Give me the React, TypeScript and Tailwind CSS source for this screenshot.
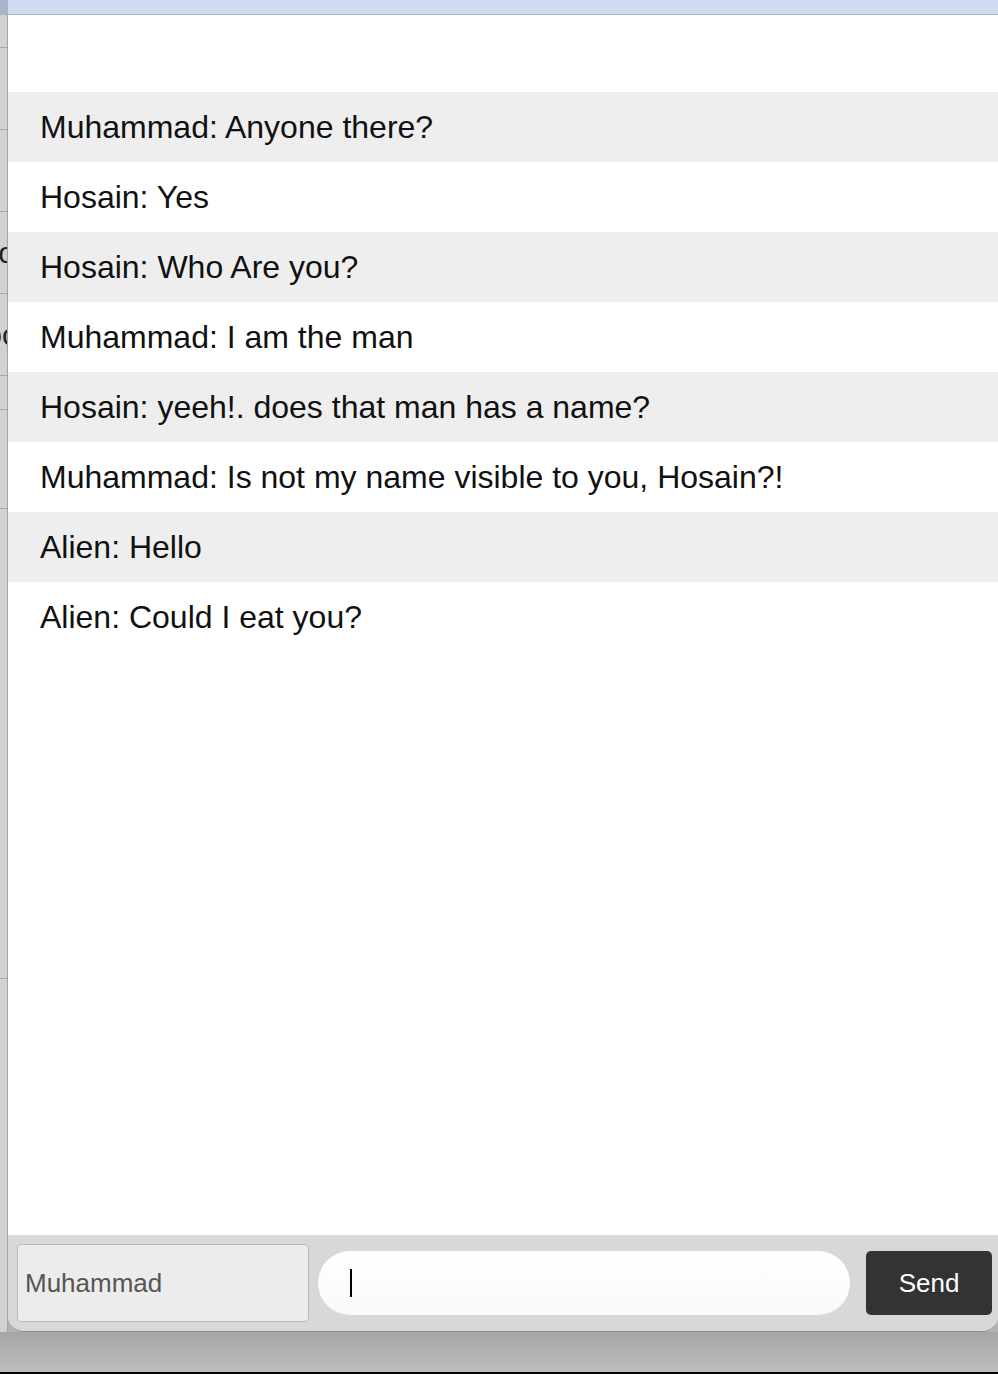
const messages = [
  "Muhammad: Anyone there?",
  "Hosain: Yes",
  "Hosain: Who Are you?",
  "Muhammad: I am the man",
  "Hosain: yeeh!. does that man has a name?",
  "Muhammad: Is not my name visible to you, Hosain?!",
  "Alien: Hello",
  "Alien: Could I eat you?",
]

const SideStrip = () => {
  return <div className="w-[8px] flex flex-col bg-[#d1d1d1] border-r border-[#a4a4a4]">
    <div className="h-[33px] border-b border-[#a9a9a9]" />
    <div className="h-[82px] border-b border-[#a9a9a9]" />
    <div className="h-[82px] border-b border-[#a9a9a9]" />
    <div className="h-[82px] border-b border-[#a9a9a9] flex items-center justify-end overflow-hidden">
      <span className="text-[30px] leading-none text-[#222] mr-[-8px]">bo</span>
    </div>
    <div className="h-[82px] border-b border-[#a9a9a9] flex items-center justify-end overflow-hidden">
      <span className="text-[30px] leading-none text-[#222] mr-[-10px]">oc</span>
    </div>
    <div className="h-[34px] border-b border-[#a9a9a9]" />
    <div className="h-[99px] border-b border-[#a9a9a9]" />
    <div className="h-[470px] border-b border-[#a9a9a9]" />
    <div className="flex-1" />
  </div>
}

const ChatPanel = () => {
  return <div className="flex-1 flex flex-col bg-white rounded-b-[16px] overflow-hidden border-b border-[#8e8e8e]">
    <div className="h-[77px]" />
    <ul className="flex flex-col">
      {messages.map((m, i) => (
        <li
          key={i}
          className={`h-[70px] flex items-center pl-[32px] text-[32px] text-[#111] ${i % 2 === 0 ? "bg-[#eeeeee]" : "bg-white"}`}
        >
          {m}
        </li>
      ))}
    </ul>
    <div className="flex-1" />
    <div className="h-[96px] bg-[#d8d8d8] flex items-center pl-[9px] pr-[6px]">
      <div className="w-[292px] h-[78px] bg-[#ececec] border border-[#b9b9b9] rounded-[4px] flex items-center pl-[7px] text-[26px] text-[#555]">
        Muhammad
      </div>
      <div className="ml-[9px] w-[532px] h-[64px] rounded-full bg-gradient-to-b from-white to-[#f9f9f9] flex items-center pl-[32px]">
        <div className="w-[2px] h-[28px] bg-black" />
      </div>
      <button className="ml-auto w-[126px] h-[64px] bg-[#333333] rounded-[5px] text-white text-[26px]">
        Send
      </button>
    </div>
  </div>
}

export default function App() {
  return <div className="w-[998px] h-[1374px] flex flex-col bg-[#b2b2b2] overflow-hidden" style={{ fontFamily: '"Liberation Sans", Arial, sans-serif' }}>
    <div className="h-[15px] flex border-b border-[#a8b0c4]">
      <div className="w-[8px] bg-[#a9b5cb]" />
      <div className="flex-1 bg-[#cddbf3]" />
    </div>
    <div className="h-[1317px] flex">
      <SideStrip />
      <ChatPanel />
    </div>
    <div className="flex-1 bg-gradient-to-b from-[#a5a5a5] to-[#bdbdbd]" />
    <div className="h-[2px] bg-black" />
  </div>
}
